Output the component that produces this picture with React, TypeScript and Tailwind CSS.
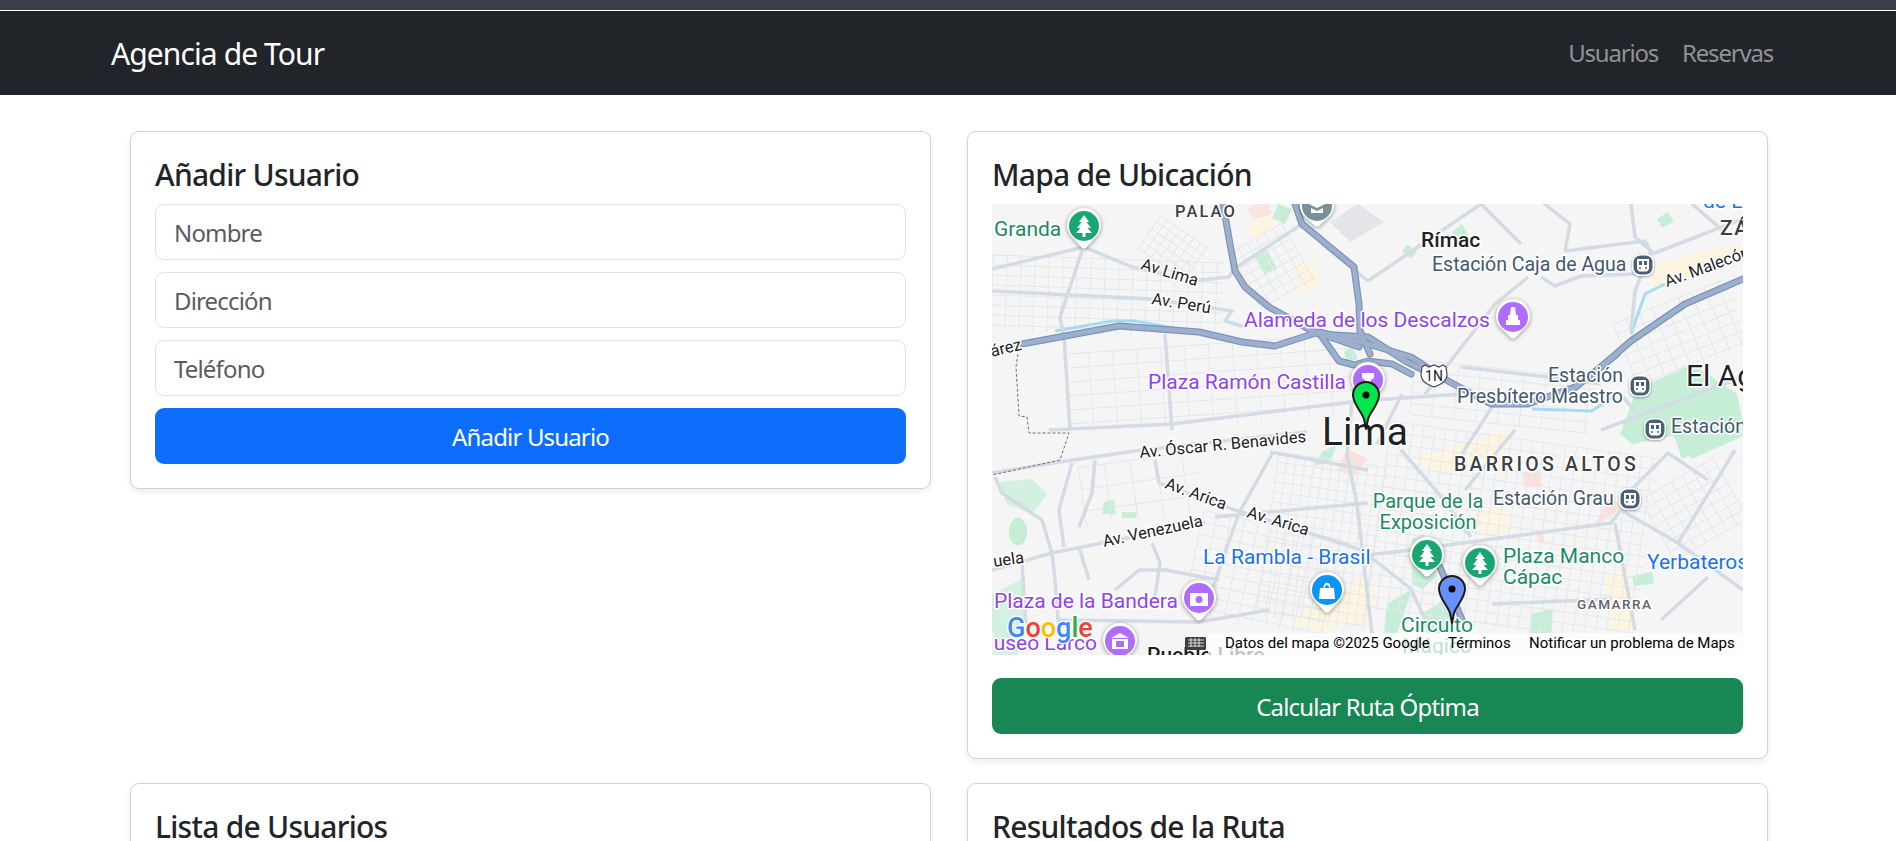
const streets = [
  "M92 43L140 63L200 77L237 73L245 60", "M245 63L310 20", "M90 47L68 113L72 133L78 226", "M0 87L160 95L240 107L233 117L253 123",
  "M173 130L180 226", "M57 226L180 220L367 197L470 190", "M0 269L67 258L150 246L315 228", "M278 248L376 266", "M280 250L247 309L220 386",
  "M223 313L376 299", "M243 306L317 329L376 348", "M163 256L167 279L243 306", "M0 366L60 349L110 339L213 318",
  "M3 273L10 289L50 316L60 349L63 376L67 426", "M103 256L100 289L87 323", "M80 259L67 306L72 343", "M87 343L97 376",
  "M123 386L147 366L173 366L227 376", "M160 339L168 359L163 393", "M67 416L207 418L277 406", "M30 360L34 420", "M376 351L419 346L619 319L629 306",
  "M623 319L643 426", "M629 306L686 339L751 386", "M686 339L743 246", "M636 289L676 249L716 276", "M716 373L669 416", "M409 246L446 289L479 333",
  "M523 226L473 286", "M376 351L419 385L440 430", "M489 0L376 77", "M536 73L503 100L433 190", "M573 47L653 37L660 50", "M639 0L643 33L659 47L643 87L639 127",
  "M549 73L563 82L589 72L643 70", "M529 40L489 0", "M469 163L556 173L609 180", "M631 193L643 207", "M609 226L751 173", "M0 65L92 43", "M376 77L330 40",
  "M660 50L751 15", "M360 200L355 250L365 300L380 430", "M410 190L385 240", "M500 203L470 250", "M700 0L735 30", "M500 400L620 395", "M573 47L578 20L540 -10",
];

const minorStreets = [
  { x: 0, y: 55, w: 230, h: 75, a: 2, dx: 14, dy: 10 },
  { x: 152, y: 25, w: 60, h: 40, a: 35, dx: 8, dy: 8 },
  { x: 250, y: 30, w: 60, h: 65, a: -30, dx: 10, dy: 9 },
  { x: 75, y: 140, w: 290, h: 80, a: -4, dx: 24, dy: 14 },
  { x: 275, y: 255, w: 110, h: 165, a: 8, dx: 9, dy: 10 },
  { x: 385, y: 235, w: 270, h: 190, a: 8, dx: 11, dy: 11 },
  { x: 200, y: 320, w: 140, h: 100, a: 12, dx: 14, dy: 12 },
  { x: 630, y: 95, w: 120, h: 70, a: -22, dx: 14, dy: 11 },
  { x: 420, y: 165, w: 180, h: 55, a: 6, dx: 22, dy: 11 },
  { x: 660, y: 270, w: 85, h: 70, a: -30, dx: 12, dy: 10 },
  { x: 90, y: 255, w: 120, h: 60, a: -8, dx: 26, dy: 22 },
];

const patches = [
  { d: "M262 50L275 46L285 65L272 70Z", c: "#c6eed6" },
  { d: "M256 25L276 10L284 20L263 35Z", c: "#fdf5e0" },
  { d: "M255 5L275 -5L280 10L262 15Z", c: "#fbe3df" },
  { d: "M286 0L300 5L293 20L280 14Z", c: "#c6eed6" },
  { d: "M352 148L360 142L366 155L355 158Z", c: "#c6eed6" },
  { d: "M415 40L425 48L419 55L410 48Z", c: "#c6eed6" },
  { d: "M338 18L366 0L392 18L358 38Z", c: "#e3e5e8" },
  { d: "M665 15L676 8L682 18L670 24Z", c: "#c6eed6" },
  { d: "M664 60L700 50L751 40L751 55L680 78L660 85Z", c: "#fdf5e0" },
  { d: "M628 230L645 185L700 160L745 190L751 220L700 222L680 232L640 240Z", c: "#c6eed6" },
  { d: "M675 225L751 215L751 232L700 255Z", c: "#c6eed6" },
  { d: "M6 278L40 275L55 290L40 310L15 300Z", c: "#d4f0de" },
  { d: "M22 315A8 12 0 0 1 30 340A8 12 0 0 1 22 315", c: "#c6eed6" },
  { d: "M0 390L30 375L34 420L25 451L0 451Z", c: "#d4f0de" },
  { d: "M112 298L122 296L124 310L110 310Z", c: "#c6eed6" },
  { d: "M130 308L145 308L144 314L130 314Z", c: "#c6eed6" },
  { d: "M330 248L345 240L338 258L322 262Z", c: "#c6eed6" },
  { d: "M345 266L355 245L376 255L362 272Z", c: "#fbe0dc" },
  { d: "M300 420L330 390L345 395L338 430Z", c: "#fdf5e0" },
  { d: "M340 420L345 395L370 370L385 385L376 420Z", c: "#fdf5e0" },
  { d: "M420 335L432 330L445 372L430 385L420 380Z", c: "#c6eed6" },
  { d: "M430 410L460 390L462 430L435 430Z", c: "#c6eed6" },
  { d: "M395 400L420 385L405 430L392 430Z", c: "#c6eed6" },
  { d: "M420 255L520 225L515 245L450 270Z", c: "#fdf5e0" },
  { d: "M485 310L510 300L520 325L490 335Z", c: "#fdf5e0" },
  { d: "M531 268L548 266L550 282L532 283Z", c: "#fbe0dc" },
  { d: "M545 330L552 330L552 338L545 338Z", c: "#fbe0dc" },
  { d: "M600 325L620 290L630 305L605 320Z", c: "#fbe0dc" },
  { d: "M612 375L636 360L645 420L620 430Z", c: "#fdf5e0" },
  { d: "M640 372L660 368L662 380L642 382Z", c: "#c6eed6" },
  { d: "M540 410L560 405L560 430L538 430Z", c: "#c6eed6" },
  { d: "M680 226L720 226L700 250L690 255Z", c: "#c6eed6" },
  { d: "M300 62L320 55L330 80L310 90Z", c: "#fdf5e0" },
  { d: "M460 28L470 20L480 38L468 42Z", c: "#c6eed6" },
];

type TextProps = {
  x: number;
  y: number;
  c: string;
  t: string;
  s?: number;
  w?: number;
  r?: number;
  ls?: number;
  anchor?: "start" | "middle" | "end";
};

const labels: TextProps[] = [
  { x: 2, y: 32, c: "#1a8a60", t: "Granda" },
  { x: 183, y: 13, c: "#3c4043", t: "PALAO", s: 16.5, w: 500, ls: 2.1 },
  { x: 148, y: 65, c: "#202124", t: "Av Lima", s: 16.5, r: 17 },
  { x: 159, y: 100, c: "#202124", t: "Av. Perú", s: 16.5, r: 9 },
  { x: 252, y: 123, c: "#8e44e8", t: "Alameda de los Descalzos" },
  { x: 156, y: 185, c: "#8e44e8", t: "Plaza Ramón Castilla" },
  { x: 0, y: 153, c: "#202124", t: "árez", s: 16.5, r: -14 },
  { x: 429, y: 43, c: "#202124", t: "Rímac", w: 500 },
  { x: 440, y: 67, c: "#43586e", t: "Estación Caja de Agua", s: 19.5 },
  { x: 675, y: 83, c: "#202124", t: "Av. Malecón", s: 16.5, r: -20 },
  { x: 711, y: 4, c: "#1a73e8", t: "de Lima" },
  { x: 728, y: 31, c: "#3c4043", t: "ZÁ", w: 500, ls: 1.5 },
  { x: 631, y: 178, c: "#43586e", t: "Estación", s: 19.5, anchor: "end" },
  { x: 631, y: 199, c: "#43586e", t: "Presbítero Maestro", s: 19.5, anchor: "end" },
  { x: 694, y: 182, c: "#202124", t: "El Agustino", s: 30 },
  { x: 679, y: 229, c: "#43586e", t: "Estación", s: 19.5 },
  { x: 330, y: 241, c: "#202124", t: "Lima", s: 39 },
  { x: 148, y: 254, c: "#202124", t: "Av. Óscar R. Benavides", s: 16.5, r: -5.5 },
  { x: 462, y: 267, c: "#3c4043", t: "BARRIOS ALTOS", s: 19.5, w: 500, ls: 3.2 },
  { x: 172, y: 284, c: "#202124", t: "Av. Arica", s: 16.5, r: 20 },
  { x: 254, y: 313, c: "#202124", t: "Av. Arica", s: 16.5, r: 17 },
  { x: 112, y: 343, c: "#202124", t: "Av. Venezuela", s: 16.5, r: -12 },
  { x: 2, y: 363, c: "#202124", t: "uela", s: 16.5, r: -8 },
  { x: 211, y: 360, c: "#1a73e8", t: "La Rambla - Brasil" },
  { x: 2, y: 404, c: "#8e44e8", t: "Plaza de la Bandera" },
  { x: 105, y: 446, c: "#8e44e8", t: "Museo Larco", anchor: "end" },
  { x: 155, y: 458, c: "#202124", t: "Pueblo Libre", w: 500 },
  { x: 436, y: 304, c: "#1a8a60", t: "Parque de la", s: 20, anchor: "middle" },
  { x: 436, y: 325, c: "#1a8a60", t: "Exposición", s: 20, anchor: "middle" },
  { x: 501, y: 301, c: "#43586e", t: "Estación Grau", s: 19.5 },
  { x: 511, y: 359, c: "#1a8a60", t: "Plaza Manco" },
  { x: 511, y: 380, c: "#1a8a60", t: "Cápac" },
  { x: 655, y: 365, c: "#1a73e8", t: "Yerbateros" },
  { x: 585, y: 405, c: "#5f6368", t: "GAMARRA", s: 13.5, w: 500, ls: 1.5 },
  { x: 445, y: 428, c: "#1a8a60", t: "Circuito", anchor: "middle" },
  { x: 445, y: 449, c: "#1a8a60", t: "Mágico", anchor: "middle" },
];

function MapLabel({ x, y, c, t, s = 21, w = 400, r = 0, ls = 0, anchor = "start" }: TextProps) {
  return (
    <text
      x={x}
      y={y}
      fill={c}
      fontSize={s}
      fontWeight={w}
      letterSpacing={ls}
      textAnchor={anchor}
      stroke="#ffffff"
      strokeWidth={3}
      strokeLinejoin="round"
      paintOrder="stroke"
      transform={r ? `rotate(${r} ${x} ${y})` : undefined}
    >
      {t}
    </text>
  );
}

function StreetGrid({ x, y, w, h, a, dx, dy }: { x: number; y: number; w: number; h: number; a: number; dx: number; dy: number }) {
  const cols = Array.from({ length: Math.floor(w / dx) + 1 }, (_, i) => x + i * dx);
  const rows = Array.from({ length: Math.floor(h / dy) + 1 }, (_, i) => y + i * dy);
  return (
    <g transform={`rotate(${a} ${x + w / 2} ${y + h / 2})`} stroke="#e4e7eb" strokeWidth={1}>
      {cols.map((c) => (
        <line key={`c${c}`} x1={c} y1={y} x2={c} y2={y + h} />
      ))}
      {rows.map((r) => (
        <line key={`r${r}`} x1={x} y1={r} x2={x + w} y2={r} />
      ))}
    </g>
  );
}

function Badge({ x, y, tip, fill, children }: { x: number; y: number; tip: number; fill: string; children: React.ReactNode }) {
  return (
    <g>
      <path
        className="drop-shadow-[0_1px_2px_rgba(0,0,0,0.4)]"
        d={`M${x - 13} ${y + 10}L${x - 2} ${tip - 1}Q${x} ${tip} ${x + 2} ${tip - 1}L${x + 13} ${y + 10}A17 17 0 1 0 ${x - 13} ${y + 10}Z`}
        fill="#ffffff"
      />
      <circle cx={x} cy={y} r={15} fill={fill} />
      <g transform={`translate(${x} ${y})`} fill="#ffffff">
        {children}
      </g>
    </g>
  );
}

function Tree() {
  return <path d="M0 -11L5 -4L2.5 -4L7 2L3.5 2L8 7L1.5 7L1.5 11L-1.5 11L-1.5 7L-8 7L-3.5 2L-7 2L-2.5 -4L-5 -4Z" />;
}

function Station({ x, y }: { x: number; y: number }) {
  return (
    <g transform={`translate(${x} ${y})`}>
      <rect x={-11} y={-11} width={22} height={22} rx={8} fill="#ffffff" className="drop-shadow-[0_1px_1px_rgba(0,0,0,0.35)]" />
      <rect x={-9.5} y={-9.5} width={19} height={19} rx={7} fill="#4a6079" />
      <path d="M-6 -6H6V4L4 6.500H-4L-6 4Z" fill="#ffffff" />
      <rect x={-4} y={-4} width={3} height={4} fill="#4a6079" />
      <rect x={1} y={-4} width={3} height={4} fill="#4a6079" />
      <circle cx={-3} cy={3} r={1} fill="#4a6079" />
      <circle cx={3} cy={3} r={1} fill="#4a6079" />
    </g>
  );
}

function Marker({ x, y, fill }: { x: number; y: number; fill: string }) {
  return (
    <g transform={`translate(${x} ${y})`}>
      <path d="M0 34L-2 24C-4 17 -13 9 -13 0A13 13 0 0 1 13 0C13 9 4 17 2 24Z" fill={fill} stroke="#1a1a1a" strokeWidth={2} strokeLinejoin="round" />
      <circle r={3.5} fill="#000000" />
    </g>
  );
}

function LimaMap() {
  return (
    <svg viewBox="0 0 751 451" className="block h-[451px] w-[751px] bg-[#f5f5f6] font-['Roboto',sans-serif]">
      {patches.map((p) => (
        <path key={p.d} d={p.d} fill={p.c} />
      ))}
      {minorStreets.map((g) => (
        <StreetGrid key={`${g.x}-${g.y}`} {...g} />
      ))}
      <path d="M63 127L120 117L143 117L233 133M540 205L600 207L625 190M673 80L653 90L639 130" fill="none" stroke="#a5dcf3" strokeWidth={3} />
      {streets.map((d) => (
        <path key={d} d={d} fill="none" stroke="#d3dbe4" strokeWidth={3.5} strokeLinejoin="round" />
      ))}
      <path d="M26 150L24 163L27 212L35 213L37 229L77 229L68 256L0 271" fill="none" stroke="#6f7378" strokeWidth={1} strokeDasharray="3 2" />
      <g fill="none" strokeLinejoin="round" strokeLinecap="round">
        {["#7d94b8", "#9cb0ce"].map((stroke, i) => (
          <g key={stroke} stroke={stroke} strokeWidth={i === 0 ? 7 : 4.5}>
            <path d="M0 147L30 140L127 122L207 128L250 138L283 142L327 128L376 140L419 153L456 177L499 200L536 200L583 183L609 163L639 137L693 100L751 75" />
            <path d="M231 0L238 40L243 67L253 83L277 103L320 127L367 143" />
            <path d="M303 0L310 20L362 63L367 100L368 127L378 150" />
            <path d="M330 133L347 157L362 161L376 157L400 160L419 170" />
            <path d="M327 130L376 133L415 158L450 175" />
            <path d="M580 186L600 170L625 150" />
            <path d="M448 363L471 418" />
          </g>
        ))}
      </g>
      {labels.map((l) => (
        <MapLabel key={`${l.t}-${l.x}`} {...l} />
      ))}
      <g transform="translate(442 172)">
        <path
          d="M-12 -9L-9 -11L-5 -9L0 -11L5 -9L9 -11L12 -9L13 -2C13 5 8 8 0 11C-8 8 -13 5 -13 -2Z"
          fill="#ffffff"
          stroke="#43484d"
          strokeWidth={1.2}
        />
        <text x={0} y={5} fontSize={14} fill="#202124" textAnchor="middle">1N</text>
      </g>
      <Badge x={92} y={22} tip={45} fill="#1aa670"><Tree /></Badge>
      <Badge x={325} y={2} tip={23} fill="#78909c"><path d="M-8 -2L0 -6L8 -2L0 2ZM-6 2L0 5L6 2L6 7H-6Z" /></Badge>
      <Badge x={521} y={113} tip={135} fill="#b06cfb"><path d="M-2 -10H2L3 -2H5V3H7V8H-7V3H-5V-2H-3Z" /></Badge>
      <Badge x={376} y={176} tip={198} fill="#b06cfb"><path d="M-6 -7H6V-2L3 0V4H5V7H-5V4H-3V0L-6 -2Z" /></Badge>
      <Badge x={335} y={386} tip={409} fill="#0a96f6"><path d="M-7 -2H7L8 9H-8ZM-3.500 -2C-3.500 -9 3.500 -9 3.500 -2H2C2 -6 -2 -6 -2 -2Z" /></Badge>
      <Badge x={207} y={394} tip={417} fill="#b06cfb"><path d="M-9 -5H9V8H-9Z" /><circle cx={0} cy={1.5} r={3.5} fill="#b06cfb" /></Badge>
      <Badge x={128} y={437} tip={460} fill="#b06cfb"><path d="M0 -8L9 -3H-9ZM-8 -2H8V8H-8Z" /><path d="M-4 0H4V6H-4Z" fill="#b06cfb" /></Badge>
      <Badge x={435} y={351} tip={373} fill="#1aa670"><Tree /></Badge>
      <Badge x={488} y={359} tip={382} fill="#1aa670"><Tree /></Badge>
      <Station x={651} y={61} />
      <Station x={648} y={182} />
      <Station x={663} y={225} />
      <Station x={638} y={295} />
      <Marker x={374} y={191} fill="#00e64d" />
      <Marker x={460} y={385} fill="#6991fd" />
      <rect x={216} y={429} width={535} height={22} fill="#ffffff" fillOpacity={0.72} />
      <g fontSize={27} fontWeight={500} stroke="#ffffff" strokeWidth={2.5} paintOrder="stroke">
        <text x={15} y={433}>
          <tspan fill="#4285f4">G</tspan>
          <tspan fill="#ea4335">o</tspan>
          <tspan fill="#fbbc05">o</tspan>
          <tspan fill="#4285f4">g</tspan>
          <tspan fill="#34a853">l</tspan>
          <tspan fill="#ea4335">e</tspan>
        </text>
      </g>
      <g>
        <rect x={193} y={433} width={21} height={13} rx={1.5} fill="#3c4043" />
        <path d="M196 436H212M196 439H212M196 442H212M199 434V443M203 434V443M207 434V443" stroke="#ffffff" strokeWidth={0.8} />
      </g>
      <g fontSize={15} fill="#000000">
        <text x={233} y={444}>Datos del mapa ©2025 Google</text>
        <text x={456} y={444}>Términos</text>
        <text x={537} y={444}>Notificar un problema de Maps</text>
      </g>
    </svg>
  );
}

function FieldInput({ placeholder }: { placeholder: string }) {
  return (
    <input
      placeholder={placeholder}
      className="mb-[12px] block h-[56px] w-full rounded-[9px] border-[1.5px] border-[#dee2e6] bg-white px-[18px] text-[24px] tracking-[-0.035em] text-[#212529] placeholder:text-[#595c5f]"
    />
  );
}

function CardTitle({ children }: { children: React.ReactNode }) {
  return <h5 className="mt-[1px] mb-[11px] text-[30px] leading-[36px] font-medium tracking-[-0.025em] text-[#212529]">{children}</h5>;
}

function Card({ className = "", children }: { className?: string; children: React.ReactNode }) {
  return (
    <div className={"rounded-[9px] border border-[#d2d2d2] bg-white p-[24px] shadow-[0_3px_6px_rgba(0,0,0,0.075)] " + className}>
      {children}
    </div>
  );
}

export default function App() {
  return (
    <div className="h-[841px] overflow-hidden bg-white font-['Noto_Sans',sans-serif]">
      <div className="h-[10px] bg-[#3b3d47]" />
      <div className="h-px bg-white" />
      <nav className="h-[84px] bg-[#212529]">
        <div className="mx-auto flex h-full w-[1710px] items-center justify-between px-[18px]">
          <a className="text-[30px] tracking-[-0.03em] text-white">Agencia de Tour</a>
          <div className="flex items-center gap-[24px] pr-[12px] text-[24px] tracking-[-0.05em] text-[#909295]">
            <a>Usuarios</a>
            <a>Reservas</a>
          </div>
        </div>
      </nav>
      <main className="mx-auto grid w-[1710px] grid-cols-[801px_801px] items-start gap-x-[36px] gap-y-[24px] px-[37px] pt-[36px]">
        <Card>
          <CardTitle>Añadir Usuario</CardTitle>
          <FieldInput placeholder="Nombre" />
          <FieldInput placeholder="Dirección" />
          <FieldInput placeholder="Teléfono" />
          <button className="block h-[56px] w-full rounded-[9px] bg-[#0d6efd] pt-[2px] text-[24px] tracking-[-0.035em] text-white">Añadir Usuario</button>
        </Card>
        <Card>
          <CardTitle>Mapa de Ubicación</CardTitle>
          <LimaMap />
          <button className="mt-[23px] block h-[56px] w-full rounded-[9px] bg-[#198754] pt-[2px] text-[24px] tracking-[-0.035em] text-white">Calcular Ruta Óptima</button>
        </Card>
        <Card className="h-[240px]">
          <CardTitle>Lista de Usuarios</CardTitle>
        </Card>
        <Card className="h-[240px]">
          <CardTitle>Resultados de la Ruta</CardTitle>
        </Card>
      </main>
    </div>
  );
}
